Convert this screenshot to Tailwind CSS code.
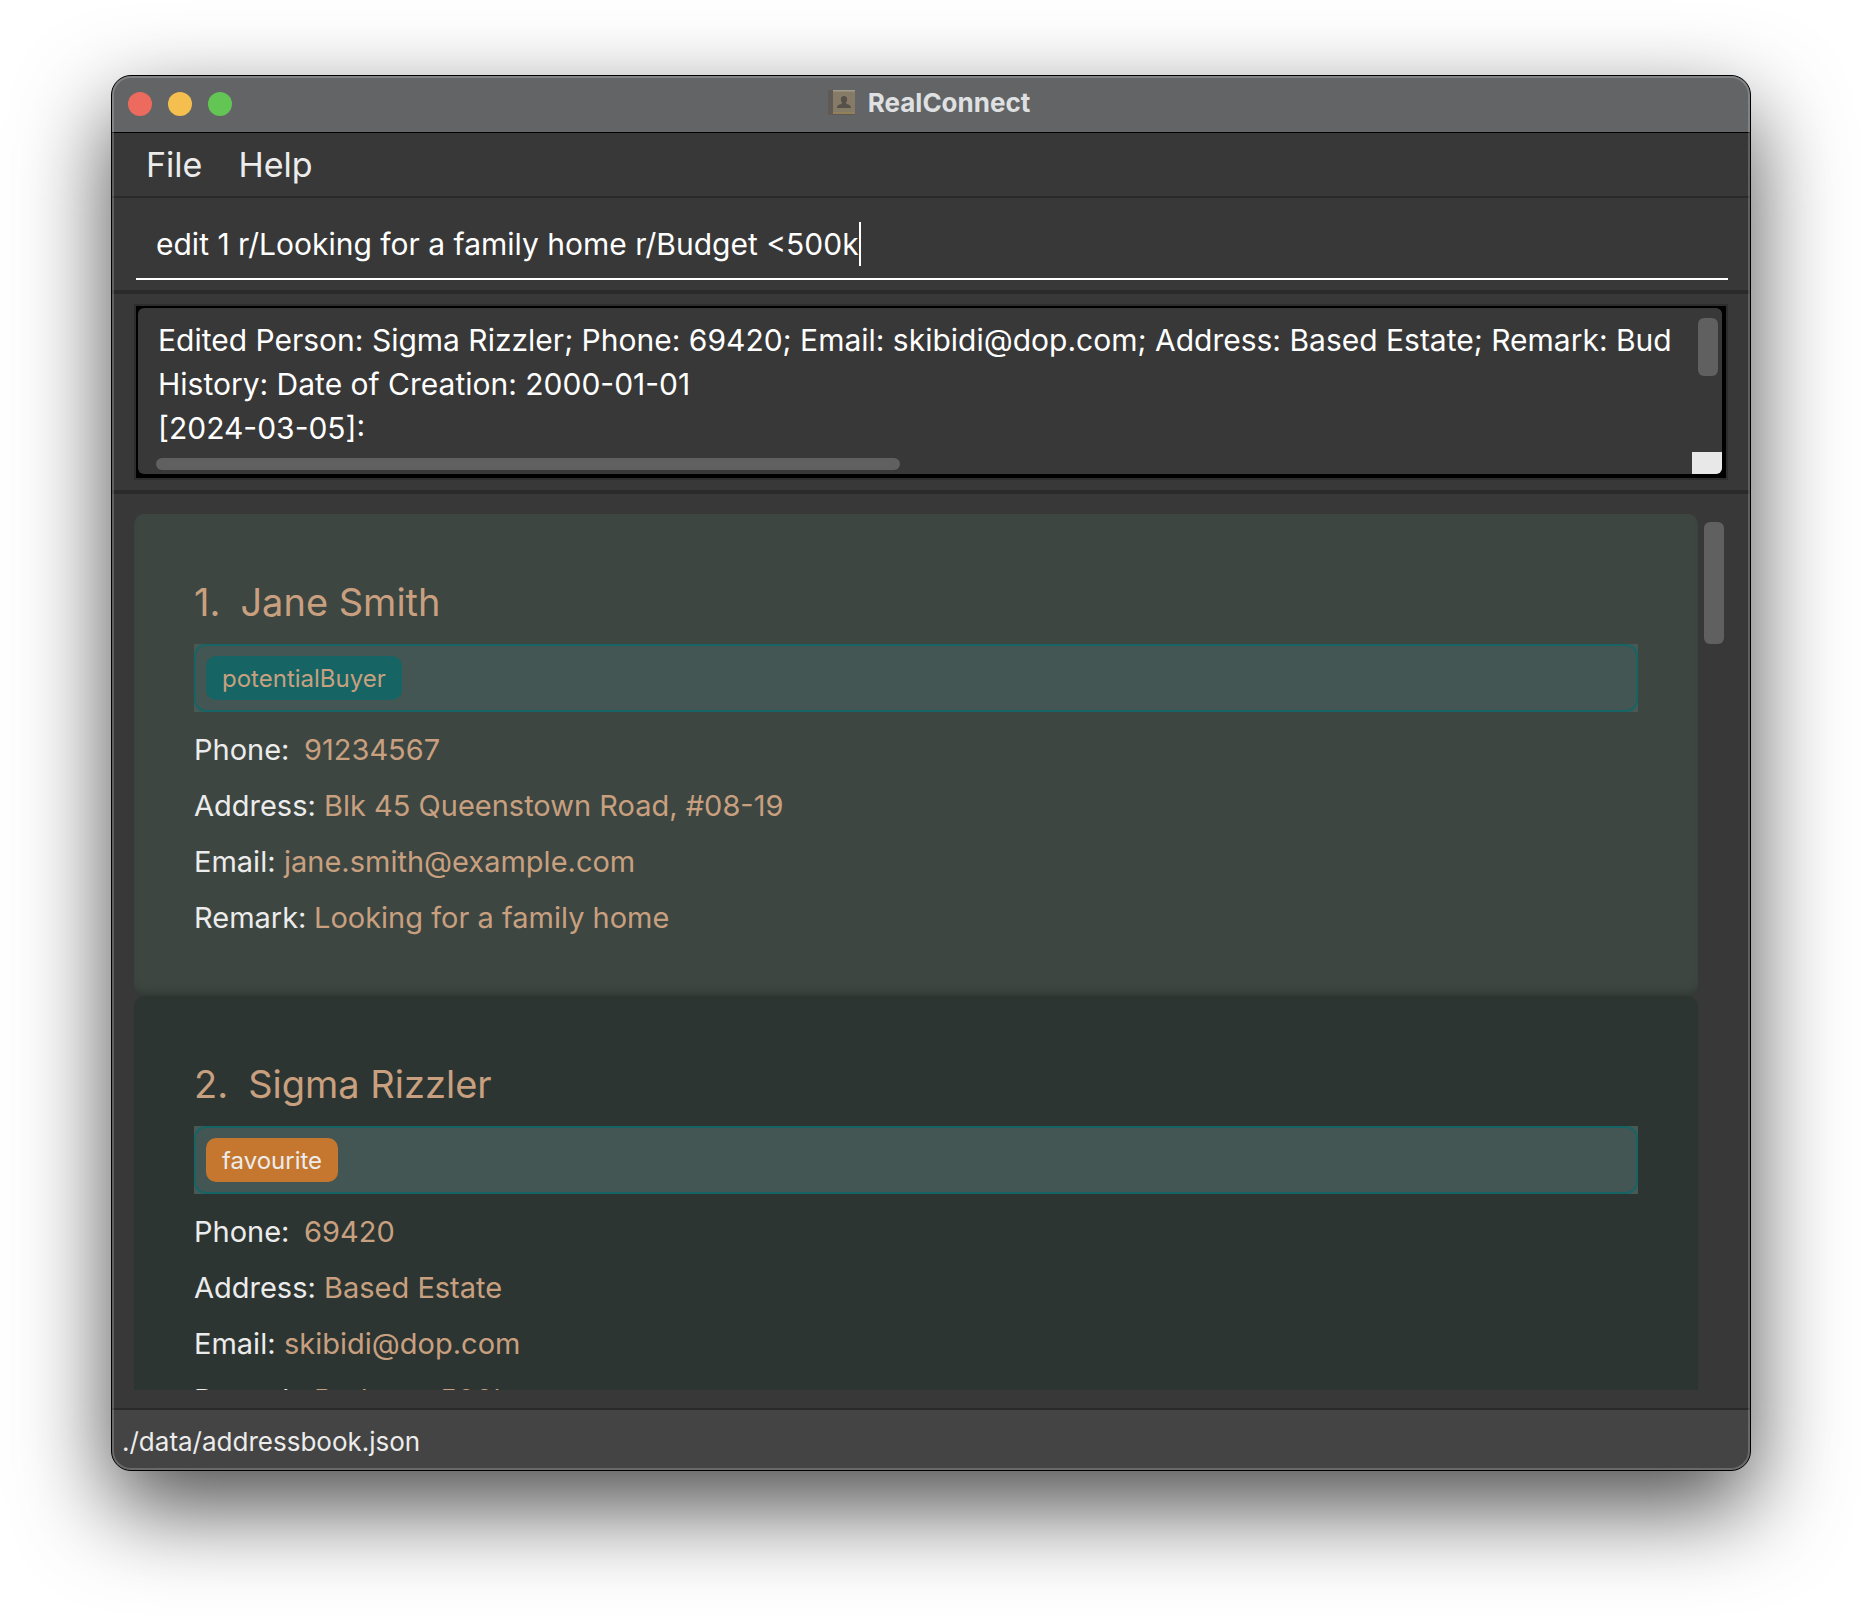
<!DOCTYPE html>
<html lang="en">
<head>
<meta charset="utf-8">
<title>RealConnect</title>
<script src="https://cdn.jsdelivr.net/npm/@tailwindcss/browser@4"></script>
</head>
<body class="bg-white font-['Inter',sans-serif] text-[#ececec]">
<div class="flex h-screen flex-col px-[111px] pt-[75px] pb-[147px]">
<div class="relative flex min-h-0 flex-1 flex-col overflow-clip rounded-[20px] border border-black bg-[#383838] shadow-[0_36px_92px_rgba(0,0,0,0.7)]">

  <header class="relative flex h-14 shrink-0 items-center justify-center gap-3 bg-[#636466] pr-1">
    <div class="absolute left-4 flex gap-4">
      <button aria-label="Close" class="size-6 rounded-full bg-[#ed6a5e]"></button>
      <button aria-label="Minimize" class="size-6 rounded-full bg-[#f5bf4f]"></button>
      <button aria-label="Zoom" class="size-6 rounded-full bg-[#62c554]"></button>
    </div>
    <svg class="-mt-1 h-[27px] w-7" viewBox="0 0 28 27" aria-hidden="true">
      <rect x="0" y="1" width="27" height="25" rx="1.5" fill="#605a56"/>
      <rect x="5" y="1" width="22" height="24" rx="1" fill="#867b66"/>
      <rect x="5" y="1" width="22" height="1.500" fill="#a1998a"/>
      <rect x="5" y="23" width="22" height="2" fill="#94815c"/>
      <path d="M16 7c2 0 3.200 1.300 3.200 3.400 0 1.600-.7 2.600-1.400 3.300 0 1.600 5.200 1.500 5.200 5.300H9c0-3.800 5.200-3.700 5.200-5.300-.7-.7-1.400-1.700-1.400-3.300C12.800 8.300 14 7 16 7z" fill="#555049"/>
    </svg>
    <h1 class="pb-[2px] text-[26px] leading-8 font-bold text-[#dfe0e1]">RealConnect</h1>
  </header>

  <nav class="flex h-[66px] shrink-0 items-center gap-9 border-t border-b-2 border-t-black border-b-[#2a2a2a] px-[34px] text-[34px]">
    <button>File</button>
    <button>Help</button>
  </nav>

  <section class="shrink-0 border-b-4 border-[#2a2a2a] pt-4 pr-[22px] pb-[10px] pl-6">
    <div class="flex h-[66px] items-center border-b-2 border-white px-5 pb-1">
      <input aria-label="Command" autocomplete="off" spellcheck="false" value="edit 1 r/Looking for a family home r/Budget &lt;500k" class="field-sizing-content h-11 border-r-2 border-white bg-transparent text-[30px] text-white outline-none">
    </div>
  </section>

  <section class="shrink-0 border-b-4 border-[#2a2a2a] px-[22px] py-[10px]">
    <div class="border-2 border-[#2d2d2d] bg-black pt-[2px] pr-1 pb-1 pl-[2px]">
      <div class="relative h-[166px] overflow-hidden rounded-md bg-[#383838] pt-[10px] pl-5">
        <div class="mr-[30px] overflow-hidden text-[30px] leading-[44px] whitespace-nowrap text-white">
          <p>Edited Person: Sigma Rizzler; Phone: 69420; Email: skibidi@dop.com; Address: Based Estate; Remark: Bud</p>
          <p>History: Date of Creation: 2000-01-01</p>
          <p>[2024-03-05]:</p>
        </div>
        <div class="absolute top-[10px] right-1 h-[58px] w-5 rounded-md bg-[#606060]"></div>
        <div class="absolute bottom-1 left-[18px] h-3 w-[47%] rounded-full bg-[#606060]"></div>
        <div class="absolute right-0 bottom-0 h-[22px] w-[30px] bg-[#e8e8e8]"></div>
      </div>
    </div>
  </section>

  <main class="flex min-h-0 flex-1 gap-[6px] pt-5 pr-[26px] pb-[18px] pl-[22px]">
    <ol class="min-w-0 flex-1 overflow-hidden">
      <li class="h-[482px] rounded-[10px] bg-[#3e4641] px-[60px] pt-[62px] shadow-[inset_0_-8px_8px_-6px_rgba(30,36,33,0.5)]">
        <h2 class="flex h-[52px] items-center gap-5 text-[38px] text-[#c8a080]"><span>1.</span><span>Jane Smith</span></h2>
        <div class="mt-4 mb-[10px] bg-[#475955]">
          <div class="flex h-[68px] items-center rounded-xl border-2 border-[#166464] bg-[#435654] px-[10px]">
            <span class="flex h-11 items-center rounded-[10px] bg-[#166464] px-4 pt-[2px] text-[24px] text-[#c8a080]">potentialBuyer</span>
          </div>
        </div>
        <dl class="text-[29px] leading-[56px] text-[#c8a080]">
          <div class="flex"><dt class="w-[110px] text-[#ececec]">Phone:</dt><dd>91234567</dd></div>
          <div class="flex"><dt class="w-[130px] text-[#ececec]">Address:</dt><dd>Blk 45 Queenstown Road, #08-19</dd></div>
          <div class="flex"><dt class="w-[90px] text-[#ececec]">Email:</dt><dd>jane.smith@example.com</dd></div>
          <div class="flex"><dt class="w-[120px] text-[#ececec]">Remark:</dt><dd>Looking for a family home</dd></div>
        </dl>
      </li>
      <li class="h-[482px] rounded-t-[10px] bg-[#2d3532] px-[60px] pt-[62px]">
        <h2 class="flex h-[52px] items-center gap-5 text-[38px] text-[#c8a080]"><span>2.</span><span>Sigma Rizzler</span></h2>
        <div class="mt-4 mb-[10px] bg-[#475955]">
          <div class="flex h-[68px] items-center rounded-xl border-2 border-[#166464] bg-[#435654] px-[10px]">
            <span class="flex h-11 items-center rounded-[10px] bg-[#c5772f] px-4 pt-[2px] text-[24px] text-[#ececec]">favourite</span>
          </div>
        </div>
        <dl class="text-[29px] leading-[56px] text-[#c8a080]">
          <div class="flex"><dt class="w-[110px] text-[#ececec]">Phone:</dt><dd>69420</dd></div>
          <div class="flex"><dt class="w-[130px] text-[#ececec]">Address:</dt><dd>Based Estate</dd></div>
          <div class="flex"><dt class="w-[90px] text-[#ececec]">Email:</dt><dd>skibidi@dop.com</dd></div>
          <div class="flex"><dt class="w-[120px] text-[#ececec]">Remark:</dt><dd>Budget &lt;500k</dd></div>
        </dl>
      </li>
    </ol>
    <div class="w-5 pt-2"><div class="h-[14%] rounded-md bg-[#606060]"></div></div>
  </main>

  <footer class="flex h-[62px] shrink-0 items-center border-t-2 border-[#2a2a2a] bg-[#444444] px-[10px] pt-[2px] text-[26px]">./data/addressbook.json</footer>

  <div class="pointer-events-none absolute inset-0 rounded-[19px] border-2 border-white/20"></div>
</div>
</div>
</body>
</html>
